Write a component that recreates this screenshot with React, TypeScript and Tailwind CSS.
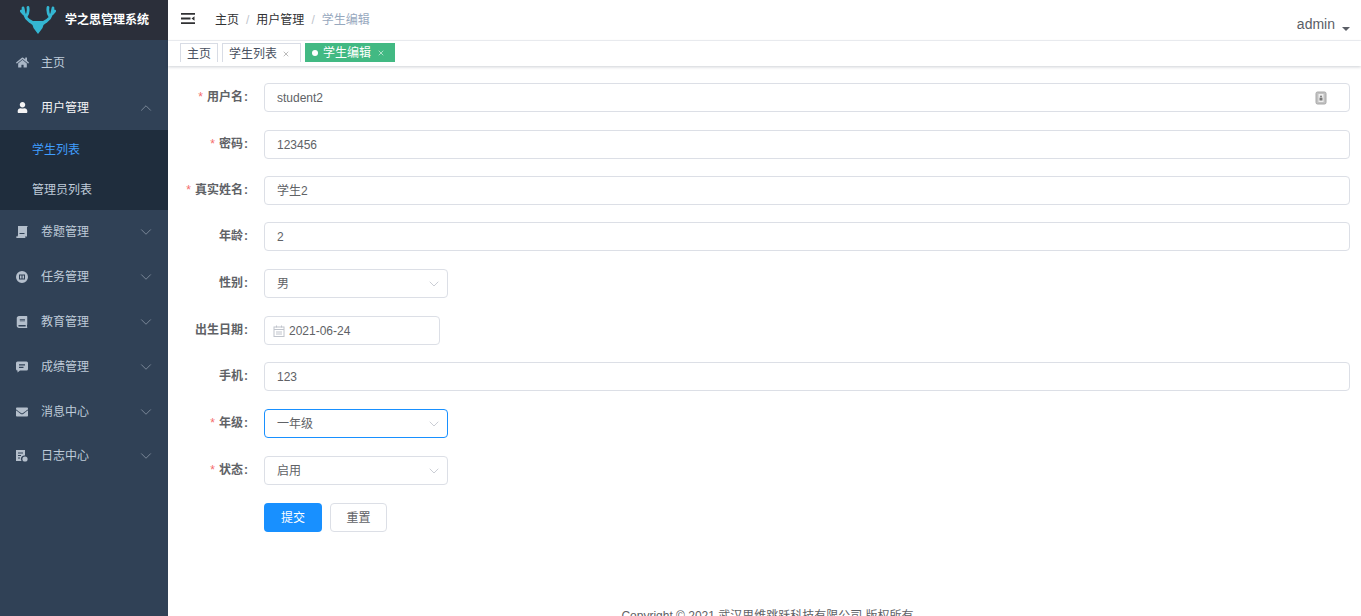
import { ChevronDown, ChevronUp, X } from 'lucide-react';
import { FaHome, FaUser, FaBook, FaEnvelope } from 'react-icons/fa';

const fontStack = "font-['Liberation_Sans','Noto_Sans_CJK_SC',sans-serif]";

function DeerLogo() {
  return (
    <svg width="36" height="30" viewBox="0 0 36 30" className="shrink-0">
      <g fill="none" stroke="#34b6d2" strokeWidth="2.8" strokeLinecap="round">
        <path d="M13 17.500C8 16 4 12 3 3M3.500 8.500L1.300 6M6 12C8 9.500 8.500 6 8 2.500" />
        <path d="M23 17.500C28 16 32 12 33 3M32.500 8.500L34.700 6M30 12C28 9.500 27.500 6 28 2.500" />
      </g>
      <path d="M8.500 17l5.500-1h8l5.500 1-4 3-1 3-4.500 6-4.500-6-1-3z" fill="#34b6d2" />
    </svg>
  );
}

function ExamIcon() {
  return (
    <svg width="12" height="12" viewBox="0 0 12 12" fill="currentColor">
      <path d="M2 0h10l-1 1v9.500H1.500L2 9zM3.500 7v1h5V7zM0 10.500h9L9.500 12H0.500z" fillRule="evenodd" />
    </svg>
  );
}

function TaskIcon() {
  return (
    <svg width="12" height="12" viewBox="0 0 12 12" fill="currentColor">
      <path d="M6 0a6 6 0 1 0 0 12A6 6 0 0 0 6 0zM3 3.500h6v5H3zM4 4.500v3h1.500v-3zM6.500 4.500v3H8v-3z" fillRule="evenodd" />
    </svg>
  );
}

function ChatIcon() {
  return (
    <svg width="12" height="12" viewBox="0 0 12 12" fill="currentColor">
      <path d="M1.500 0.500h9A1.500 1.500 0 0 1 12 2v6a1.500 1.500 0 0 1-1.500 1.500H4L1.500 11.500V9.500A1.500 1.500 0 0 1 0 8V2A1.500 1.500 0 0 1 1.500 0.500zM3 3.300v1.200h6V3.300zM3 5.800V7h4.500V5.800z" fillRule="evenodd" />
    </svg>
  );
}

function LogIcon() {
  return (
    <svg width="12" height="12" viewBox="0 0 12 12" fill="currentColor">
      <path d="M0 0h9v5.500A3.500 3.500 0 0 0 5.500 11H0zM2 2.500v1h5v-1zM2 5v1h3V5zM2 7.500v1h2v-1z" fillRule="evenodd" />
      <circle cx="9" cy="9" r="2.600" />
    </svg>
  );
}

function CalendarIcon() {
  return (
    <svg width="12" height="12" viewBox="0 0 12 12" fill="none" stroke="#c0c4cc" strokeWidth="1">
      <rect x="1" y="2" width="10" height="9.500" />
      <path d="M1 4.500h10M3.500 0.500v2M8.500 0.500v2M3 7h6M3 9h6" />
    </svg>
  );
}

const menuAfter = [
  { label: '卷题管理', icon: <ExamIcon /> },
  { label: '任务管理', icon: <TaskIcon /> },
  { label: '教育管理', icon: <FaBook size={12} /> },
  { label: '成绩管理', icon: <ChatIcon /> },
  { label: '消息中心', icon: <FaEnvelope size={12} /> },
  { label: '日志中心', icon: <LogIcon /> },
];

function Sidebar() {
  return (
    <aside className="w-[168px] shrink-0 bg-[#304156] h-full">
      <div className="h-10 bg-[#2b2f3a] flex items-center pl-5 gap-[9px]">
        <DeerLogo />
        <span className="text-white text-xs font-bold">学之思管理系统</span>
      </div>
      <div className="h-[45px] flex items-center pl-4 text-[#bfcbd9] text-xs">
        <FaHome size={13} className="text-[#a9b6c6]" />
        <span className="ml-[12px]">主页</span>
      </div>
      <div className="h-[45px] flex items-center pl-4 pr-4 text-[#f4f4f5] text-xs">
        <FaUser size={11} className="ml-px" />
        <span className="ml-[13px] flex-1">用户管理</span>
        <ChevronUp size={18} strokeWidth={1.25} className="text-[#7d8a9a] -mr-[3px]" />
      </div>
      <div className="bg-[#1f2d3d] text-xs">
        <div className="h-10 flex items-center pl-8 text-[#409eff]">学生列表</div>
        <div className="h-10 flex items-center pl-8 text-[#bfcbd9]">管理员列表</div>
      </div>
      {menuAfter.map((item) => (
        <div key={item.label} className="h-[44.8px] flex items-center pl-4 pr-4 text-[#bfcbd9] text-xs">
          <span className="w-3 flex justify-center text-[#b4bfcc]">{item.icon}</span>
          <span className="ml-[13px] flex-1">{item.label}</span>
          <ChevronDown size={18} strokeWidth={1.25} className="text-[#7d8a9a] -mr-[3px]" />
        </div>
      ))}
    </aside>
  );
}

function Header() {
  return (
    <>
      <div className="h-[41px] shrink-0 flex items-center border-b border-[#f0f2f5] relative">
        <svg width="14" height="11" viewBox="0 0 14 11" className="ml-[13px] -mt-[4px]" fill="#303133">
          <path d="M0 0h14v1.800H0zM0 4.600h9.500v1.800H0zM0 9.200h14V11H0zM10.500 5.500L13.500 3.300v4.400z" />
        </svg>
        <div className="ml-[20px] -mt-[1px] text-xs text-[#303133] flex items-center">
          <span>主页</span>
          <span className="mx-[7px] text-[#c0c4cc]">/</span>
          <span>用户管理</span>
          <span className="mx-[7px] text-[#c0c4cc]">/</span>
          <span className="text-[#97a8be]">学生编辑</span>
        </div>
        <div className="absolute right-[11px] top-[14px] flex items-center text-sm text-[#5a5e66]">
          <span>admin</span>
          <span className="ml-[7px] mt-[9px] w-0 h-0 border-x-[4px] border-x-transparent border-t-[4px] border-t-[#5a5e66]" />
        </div>
      </div>
      <div className="h-[25px] shrink-0 flex items-start pt-[2px] pl-3 text-xs shadow-[0_1px_3px_rgba(0,21,41,0.2)] relative">
        <div className="h-[19px] pt-px px-[6px] border border-b-0 border-[#d8dce5] text-[#495060] flex items-center">主页</div>
        <div className="h-[19px] pt-px w-[79px] ml-1 pl-[6px] border border-b-0 border-[#d8dce5] text-[#495060] flex items-center">
          学生列表
          <X size={8} className="ml-[5px] text-[#999]" />
        </div>
        <div className="h-[19px] pt-px ml-1 w-[90px] bg-[#42b983] text-white flex items-center pl-[7px]">
          <span className="w-[6px] h-[6px] rounded-full bg-white mr-[5px]" />
          学生编辑
          <X size={8} className="ml-[6px] text-[#e4f5ec]" />
        </div>
      </div>
    </>
  );
}

const inputBase = 'h-[29px] rounded border text-xs text-[#606266] flex items-center bg-white';

function Row({ label, required, tight, children }: { label: string; required?: boolean; tight?: boolean; children: React.ReactNode }) {
  return (
    <div className={`flex h-[29px] ${tight ? 'mb-[17px]' : 'mb-[18px]'}`}>
      <label className="w-[96px] shrink-0 text-right pr-4 text-xs font-bold text-[#606266] leading-[29px]">
        {required && <span className="text-[#f56c6c] mr-1 font-normal">*</span>}
        {label}
        <span className="ml-px">:</span>
      </label>
      <div className="flex-1 min-w-0">{children}</div>
    </div>
  );
}

function TextField({ value, lock }: { value: string; lock?: boolean }) {
  return (
    <div className={`${inputBase} border-[#dcdfe6] px-3 justify-between`}>
      <span>{value}</span>
      {lock && (
        <svg width="12" height="14" viewBox="0 0 12 14" className="mr-[10px]">
          <rect x="1" y="1" width="10" height="12" rx="1.500" fill="#c2c2c2" stroke="#a8a8a8" />
          <rect x="3.500" y="3" width="5" height="8" fill="#eeeeee" />
          <path d="M6 4l1.500 2.500h-3zM4.500 7h3v2.500h-3z" fill="#777" />
        </svg>
      )}
    </div>
  );
}

function SelectField({ value, focused }: { value: string; focused?: boolean }) {
  return (
    <div className={`${inputBase} w-[184px] pl-3 pr-[5px] justify-between ${focused ? 'border-[#1890ff]' : 'border-[#dcdfe6]'}`}>
      <span>{value}</span>
      <ChevronDown size={16} strokeWidth={1.25} className="text-[#c0c4cc]" />
    </div>
  );
}

function StudentForm() {
  return (
    <div className="flex-1 min-h-0 pt-[17px] pr-[11px]">
      <Row label="用户名" required>
        <TextField value="student2" lock />
      </Row>
      <Row label="密码" required tight>
        <TextField value="123456" />
      </Row>
      <Row label="真实姓名" required tight>
        <TextField value="学生2" />
      </Row>
      <Row label="年龄">
        <TextField value="2" />
      </Row>
      <Row label="性别">
        <SelectField value="男" />
      </Row>
      <Row label="出生日期" tight>
        <div className={`${inputBase} border-[#dcdfe6] w-[176px] pl-2 gap-1`}>
          <CalendarIcon />
          <span>2021-06-24</span>
        </div>
      </Row>
      <Row label="手机">
        <TextField value="123" />
      </Row>
      <Row label="年级" required>
        <SelectField value="一年级" focused />
      </Row>
      <Row label="状态" required>
        <SelectField value="启用" />
      </Row>
      <div className="flex pl-[96px] gap-2">
        <button className="h-[29px] w-[58px] rounded bg-[#1890ff] text-white text-xs">提交</button>
        <button className="h-[29px] w-[57px] rounded border border-[#dcdfe6] text-[#606266] text-xs">重置</button>
      </div>
    </div>
  );
}

export default function App() {
  return (
    <div className={`${fontStack} w-[1361px] h-[616px] flex overflow-hidden bg-white`}>
      <Sidebar />
      <main className="flex-1 min-w-0 flex flex-col relative">
        <Header />
        <StudentForm />
        <div className="absolute left-0 right-0 top-[606px] pl-[6px] text-center text-xs text-[#606266] leading-5">
          Copyright © 2021 武汉思维跳跃科技有限公司 版权所有
        </div>
      </main>
    </div>
  );
}
